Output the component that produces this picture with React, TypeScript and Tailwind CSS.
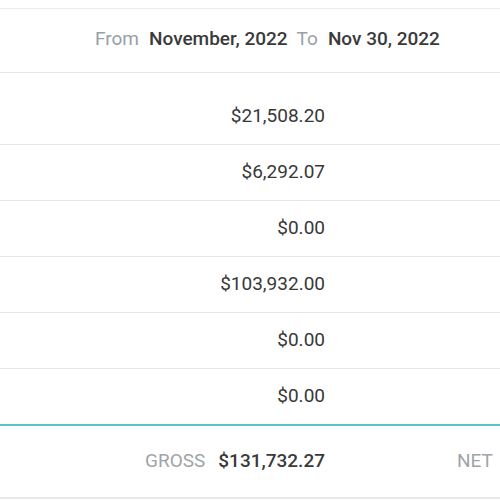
import React from 'react'

const rows = ['$21,508.20', '$6,292.07', '$0.00', '$103,932.00', '$0.00', '$0.00']

function AmountRow({ amount, first }: { amount: string; first?: boolean }) {
  return (
    <div className={`flex items-center border-t border-[#e6e6e6] ${first ? 'h-[72px] pt-4' : 'h-[56px]'}`}>
      <div className="w-[325px] text-right text-[19px] text-[#383838]">{amount}</div>
    </div>
  )
}

export default function App() {
  return (
    <div className="w-[500px] h-[500px] overflow-hidden bg-white font-['Roboto',sans-serif]">
      <div className="mt-[8px] flex h-[64px] items-center border-t border-[#ececec] pl-[95px] pb-[2px] text-[19px]">
        <span className="text-[#98a0a8]">From</span>
        <span className="ml-[10px] font-medium text-[#3a3a3a]">November, 2022</span>
        <span className="ml-[9px] text-[#98a0a8]">To</span>
        <span className="ml-[10px] font-medium text-[#3a3a3a]">Nov 30, 2022</span>
      </div>
      {rows.map((amount, i) => (
        <AmountRow key={i} amount={amount} first={i === 0} />
      ))}
      <div className="flex h-[75px] items-center border-t-2 border-b-2 border-t-[#5bc4c8] border-b-[#e8e8e8]">
        <div className="flex w-[325px] justify-end text-[19px]">
          <span className="text-[#a0a4a8]">GROSS</span>
          <span className="ml-[13px] font-medium text-[#3a3a3a]">$131,732.27</span>
        </div>
        <span className="ml-[132px] text-[19px] text-[#a0a4a8]">NET</span>
      </div>
    </div>
  )
}
